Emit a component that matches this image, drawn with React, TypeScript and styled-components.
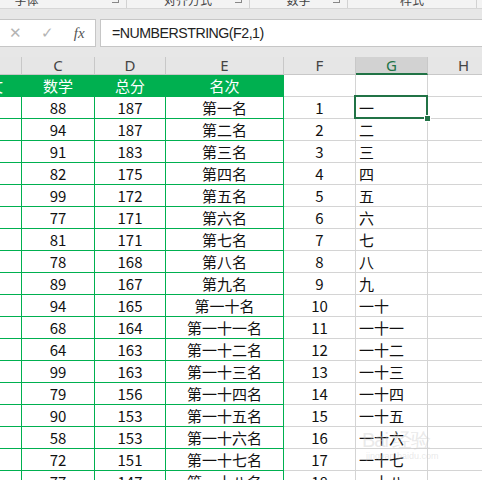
import React from 'react'
import styled, { createGlobalStyle, css } from 'styled-components'

const GlobalStyle = createGlobalStyle`
  html, body { margin: 0; padding: 0; background: #e7e7e7; }
  body { width: 482px; height: 480px; overflow: hidden; }
`

const GREEN = '#00b050'
const GRID = '#d4d4d4'
const SELECT = '#217346'

const Window = styled.div`
  width: 482px;
  height: 480px;
  overflow: hidden;
  position: relative;
  background: #e7e7e7;
  font-family: "Noto Sans CJK SC", "Noto Sans", sans-serif;
`

const Ribbon = styled.div`
  height: 8px;
  display: flex;
  overflow: hidden;
  background: #f3f3f3;
  border-bottom: 1px solid #d6d6d6;
`

const Group = styled.div<{ $w: number; $shift?: number }>`
  width: ${p => p.$w}px;
  margin-left: ${p => p.$shift || 0}px;
  flex-shrink: 0;
  position: relative;
  display: flex;
  justify-content: center;
  border-right: 1px solid #d2d2d2;
  box-sizing: border-box;
`

const GroupLabel = styled.span`
  font-size: 12px;
  line-height: 12px;
  margin-top: -6px;
  color: #444;
  white-space: nowrap;
`

const Launcher = styled.span`
  position: absolute;
  right: 7px;
  top: -4px;
  width: 6px;
  height: 6px;
  border: 1px solid #888;
  border-top: none;
  border-left: none;
`

const FormulaRow = styled.div`
  display: flex;
  gap: 4px;
  height: 28px;
  margin-top: 10px;
`

const NameBox = styled.div`
  width: 96px;
  box-sizing: border-box;
  background: #fff;
  border: 1px solid #c6c6c6;
  border-left: none;
  display: flex;
  align-items: center;
  color: #b4b4b4;
`

const FxButton = styled.span<{ $dark?: boolean }>`
  width: 32px;
  display: flex;
  justify-content: center;
  align-items: center;
  color: ${p => (p.$dark ? '#555' : '#b4b4b4')};
  font-family: "Liberation Serif", serif;
  font-style: ${p => (p.$dark ? 'italic' : 'normal')};
  font-size: 15px;
`

const FormulaInput = styled.div`
  flex: 1;
  background: #fff;
  border: 1px solid #c6c6c6;
  border-right: none;
  display: flex;
  align-items: center;
  padding-left: 11px;
  font-family: "Liberation Sans", sans-serif;
  font-size: 14.2px;
  letter-spacing: -0.5px;
  color: #222;
`

const SheetArea = styled.div`
  margin-top: 10px;
  overflow: hidden;
  width: 482px;
`

const Sheet = styled.div`
  margin-left: -45px;
  display: grid;
  grid-template-columns: 67px 73px 71px 118px 72px 72px 72px;
  grid-auto-rows: 22px;
  grid-template-rows: 18px;
  width: max-content;
`

const ColHead = styled.div<{ $sel?: boolean }>`
  box-sizing: border-box;
  display: flex;
  justify-content: center;
  align-items: center;
  background: ${p => (p.$sel ? '#d2d2d2' : '#e6e6e6')};
  color: ${p => (p.$sel ? SELECT : '#444')};
  border-right: 1px solid #c8c8c8;
  border-bottom: ${p => (p.$sel ? `2px solid ${SELECT}` : '1px solid #c8c8c8')};
  font-family: "Noto Sans", sans-serif;
  font-size: 15px;
  line-height: 1;
`

const Cell = styled.div<{ $green?: boolean; $head?: boolean; $left?: boolean; $sel?: boolean }>`
  box-sizing: border-box;
  position: relative;
  display: flex;
  align-items: center;
  justify-content: ${p => (p.$left ? 'flex-start' : 'center')};
  padding-left: ${p => (p.$left ? '3px' : '0')};
  background: ${p => (p.$head ? GREEN : '#fff')};
  color: ${p => (p.$head ? '#fff' : '#111')};
  border-right: 1px solid ${p => (p.$green ? GREEN : GRID)};
  border-bottom: 1px solid ${p => (p.$green ? GREEN : GRID)};
  font-size: 15px;
  white-space: nowrap;
  ${p =>
    p.$sel &&
    css`
      &::after {
        content: '';
        position: absolute;
        left: -2px;
        top: -2px;
        right: -1px;
        bottom: -1px;
        border: 2px solid ${SELECT};
        z-index: 2;
      }
      &::before {
        content: '';
        position: absolute;
        right: -4px;
        bottom: -4px;
        width: 5px;
        height: 5px;
        background: ${SELECT};
        border: 1px solid #fff;
        z-index: 3;
      }
    `}
`

const Watermark = styled.div`
  position: absolute;
  left: 362px;
  top: 430px;
  color: rgba(200, 200, 200, 0.4);
  font-family: "Liberation Sans", sans-serif;
  pointer-events: none;
  line-height: 1;
`

const WmBig = styled.div`
  font-size: 20px;
  letter-spacing: -1px;
`

const WmSmall = styled.div`
  font-size: 9px;
  margin-top: 2px;
  margin-left: 4px;
`

const cn = ['一', '二', '三', '四', '五', '六', '七', '八', '九']
const toCn = (n: number) => (n < 10 ? cn[n - 1] : '一十' + (n > 10 ? cn[n - 11] : ''))

const scores: [number, number][] = [
  [88, 187], [94, 187], [91, 183], [82, 175], [99, 172], [77, 171], [81, 171], [78, 168], [89, 167],
  [94, 165], [68, 164], [64, 163], [99, 163], [79, 156], [90, 153], [58, 153], [72, 151], [77, 147],
]

const letters = ['B', 'C', 'D', 'E', 'F', 'G', 'H']

export default function App() {
  return (
    <Window>
      <GlobalStyle />
      <Ribbon>
        <Group $w={200} $shift={-73}>
          <GroupLabel>字体</GroupLabel>
          <Launcher />
        </Group>
        <Group $w={123}>
          <GroupLabel>对齐方式</GroupLabel>
          <Launcher />
        </Group>
        <Group $w={98}>
          <GroupLabel>数字</GroupLabel>
          <Launcher />
        </Group>
        <Group $w={129}>
          <GroupLabel>样式</GroupLabel>
        </Group>
      </Ribbon>
      <FormulaRow>
        <NameBox>
          <FxButton>✕</FxButton>
          <FxButton>✓</FxButton>
          <FxButton $dark>fx</FxButton>
        </NameBox>
        <FormulaInput>=NUMBERSTRING(F2,1)</FormulaInput>
      </FormulaRow>
      <SheetArea>
        <Sheet>
          {letters.map(l => (
            <ColHead key={l} $sel={l === 'G'}>{l}</ColHead>
          ))}
          {['语文', '数学', '总分', '名次'].map(t => (
            <Cell key={t} $green $head>{t}</Cell>
          ))}
          <Cell />
          <Cell />
          <Cell />
          {scores.map(([m, total], i) => {
            const n = i + 1
            return (
              <React.Fragment key={n}>
                <Cell $green />
                <Cell $green>{m}</Cell>
                <Cell $green>{total}</Cell>
                <Cell $green>第{toCn(n)}名</Cell>
                <Cell>{n}</Cell>
                <Cell $left $sel={n === 1}>{toCn(n)}</Cell>
                <Cell />
              </React.Fragment>
            )
          })}
        </Sheet>
      </SheetArea>
      <Watermark>
        <WmBig>Bai 经验</WmBig>
        <WmSmall>jingyan.baidu.com</WmSmall>
      </Watermark>
    </Window>
  )
}
